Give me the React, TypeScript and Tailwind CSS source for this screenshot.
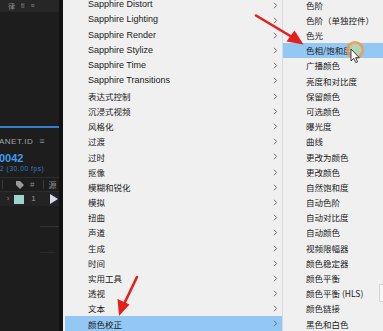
import React from 'react';

const mainItems = [
  'Sapphire Distort',
  'Sapphire Lighting',
  'Sapphire Render',
  'Sapphire Stylize',
  'Sapphire Time',
  'Sapphire Transitions',
  '表达式控制',
  '沉浸式视频',
  '风格化',
  '过渡',
  '过时',
  '抠像',
  '模糊和锐化',
  '模拟',
  '扭曲',
  '声道',
  '生成',
  '时间',
  '实用工具',
  '透视',
  '文本',
  '颜色校正',
];

const subItems = [
  '色阶',
  '色阶（单独控件）',
  '色光',
  '色相/饱和度',
  '广播颜色',
  '亮度和对比度',
  '保留颜色',
  '可选颜色',
  '曝光度',
  '曲线',
  '更改为颜色',
  '更改颜色',
  '自然饱和度',
  '自动色阶',
  '自动对比度',
  '自动颜色',
  '视频限幅器',
  '颜色稳定器',
  '颜色平衡',
  '颜色平衡 (HLS)',
  '颜色链接',
  '黑色和白色',
];

const isLatin = (s: string) => /^[A-Za-z ]+$/.test(s);

function LeftPanel() {
  return (
    <div className="w-[63px] shrink-0 h-full bg-[#1d1d1d] flex font-['Liberation_Sans',sans-serif]">
      <div className="flex-1 flex flex-col overflow-hidden">
        {/* panel tab strip */}
        <div className="h-[12px] bg-[#262626] flex items-center gap-[6px] pl-[8px] text-[7px] leading-[8px] text-[#8a8a8a]">
          <span className="font-['Noto_Sans_CJK_SC',sans-serif]">律</span>
          <span>ti</span>
          <span>≡</span>
        </div>
        <div className="h-[114px]" />
        <div className="h-[2px] bg-[#2f80d4]" />
        {/* timeline header */}
        <div className="h-[24px] flex items-end pb-[4px] gap-[6px] text-[8px] text-[#a5a5a5] tracking-[0.5px] whitespace-nowrap">
          <span className="-ml-[1px]">ANET.ID</span>
          <span className="text-[9px] text-[#8a8a8a]">≡</span>
        </div>
        <div className="mt-[1px] text-[11px] leading-[11px] font-bold text-[#3d9bf0] -ml-[1px]">0042</div>
        <div className="mt-[1px] text-[6.5px] leading-[8px] text-[#3a7fc4] whitespace-nowrap tracking-[0.6px]">2 (30.00 fps)</div>
        <div className="mt-[4px] h-px bg-[#2c2c2c]" />
        <div className="h-[13px] flex items-center text-[8px] text-[#8d8d8d] whitespace-nowrap">
          <span className="w-px h-[9px] bg-[#3a3a3a] ml-[2px]" />
          <svg width="8" height="8" viewBox="0 0 8 8" className="ml-[13px]">
            <path d="M0 0h4l4 4-4 4-4-4z" fill="#9a9a9a" />
          </svg>
          <span className="ml-[6px]">#</span>
          <span className="w-px h-[9px] bg-[#3a3a3a] ml-[9px]" />
          <span className="ml-[4px] text-[8px] font-['Noto_Sans_CJK_SC',sans-serif]">源</span>
        </div>
        <div className="h-px bg-[#2c2c2c]" />
        <div className="h-[14px] bg-[#232323] flex items-center text-[8px] text-[#9a9a9a]">
          <span className="ml-[7px] text-[7px]">›</span>
          <span className="ml-[5px] w-[10px] h-[9px] bg-[#9fd4cd]" />
          <span className="ml-[7px]">1</span>
          <svg width="8" height="10" viewBox="0 0 8 10" className="ml-[14px]">
            <path d="M0 0l8 5-8 5z" fill="#d8d8f0" />
          </svg>
        </div>
        <div className="mt-[20px] ml-[40px] w-[20px] h-px bg-[#333]" />
        <div className="mt-[25px] ml-[40px] w-[15px] h-px bg-[#2a2a2a]" />
      </div>
      <div className="w-[4px] h-full bg-[#121212]" />
    </div>
  );
}

function Chevron() {
  return (
    <svg width="5" height="7" viewBox="0 0 5 7">
      <path d="M1 0.8l2.6 2.7L1 6.2" stroke="#6a6a6a" strokeWidth="1" fill="none" />
    </svg>
  );
}

function MainMenu() {
  return (
    <div className="w-[219px] shrink-0 h-full bg-[#f0f0f0] overflow-hidden pl-[2px]">
      <div className="-mt-[2.6px]">
        {mainItems.map((item, i) => (
          <div
            key={item}
            className={`h-[15.2px] flex items-center justify-between pl-[23px] pr-[4px] ${
              i === mainItems.length - 1 ? 'bg-[#93c8f4]' : ''
            }`}
          >
            <span
              className={`text-[#1a1a1a] whitespace-nowrap ${
                isLatin(item)
                  ? "font-['Liberation_Sans',sans-serif] text-[9px]"
                  : "font-['Noto_Sans_CJK_SC',sans-serif] text-[8.5px]"
              }`}
            >
              {item}
            </span>
            <Chevron />
          </div>
        ))}
      </div>
    </div>
  );
}

function SubMenu() {
  return (
    <div className="flex-1 h-full bg-[#f0f0f0] border-l border-[#dadada] overflow-hidden">
      <div className="-mt-[2.6px]">
        {subItems.map((item, i) => (
          <div
            key={item}
            className={`h-[15.2px] flex items-center pl-[23px] ${i === 3 ? 'bg-[#93c8f4]' : ''}`}
          >
            <span className="text-[#1a1a1a] whitespace-nowrap text-[8.5px] font-['Noto_Sans_CJK_SC','Liberation_Sans',sans-serif]">
              {item}
            </span>
          </div>
        ))}
      </div>
    </div>
  );
}

export default function App() {
  return (
    <div className="relative w-[383px] h-[331px] overflow-hidden flex bg-[#1d1d1d]">
      <LeftPanel />
      <MainMenu />
      <SubMenu />

      {/* something peeking in behind the submenu */}
      <div className="absolute left-[379px] top-[284px] w-[8px] h-[18px] border border-[#d4d4d4] bg-[#f7f7f7]" />

      {/* red annotation arrows + cursor highlight */}
      <svg className="absolute inset-0 pointer-events-none" width="383" height="331" viewBox="0 0 383 331">
        <path d="M256 15.5 L292 37" stroke="#e3201b" strokeWidth="2.6" strokeLinecap="round" />
        <path d="M303.5 44.5 L286.5 41.5 L294.5 30.5 Z" fill="#e3201b" />
        <path d="M137 277 L124.5 303" stroke="#e3201b" strokeWidth="2.6" strokeLinecap="round" />
        <path d="M119 316 L117.5 299 L129.5 304.5 Z" fill="#e3201b" />

        <circle cx="355" cy="50" r="6.5" fill="#b9d7a6" fillOpacity="0.85" />
        <circle cx="355" cy="50" r="7.8" fill="none" stroke="#f09a4e" strokeWidth="2.6" strokeOpacity="0.9" />
        <path
          d="M351 49 L351 61 L353.8 58.4 L355.8 62.6 L357.6 61.8 L355.6 57.7 L359.3 57.7 Z"
          fill="#ffffff"
          stroke="#111"
          strokeWidth="0.8"
          strokeLinejoin="round"
        />
      </svg>
    </div>
  );
}
